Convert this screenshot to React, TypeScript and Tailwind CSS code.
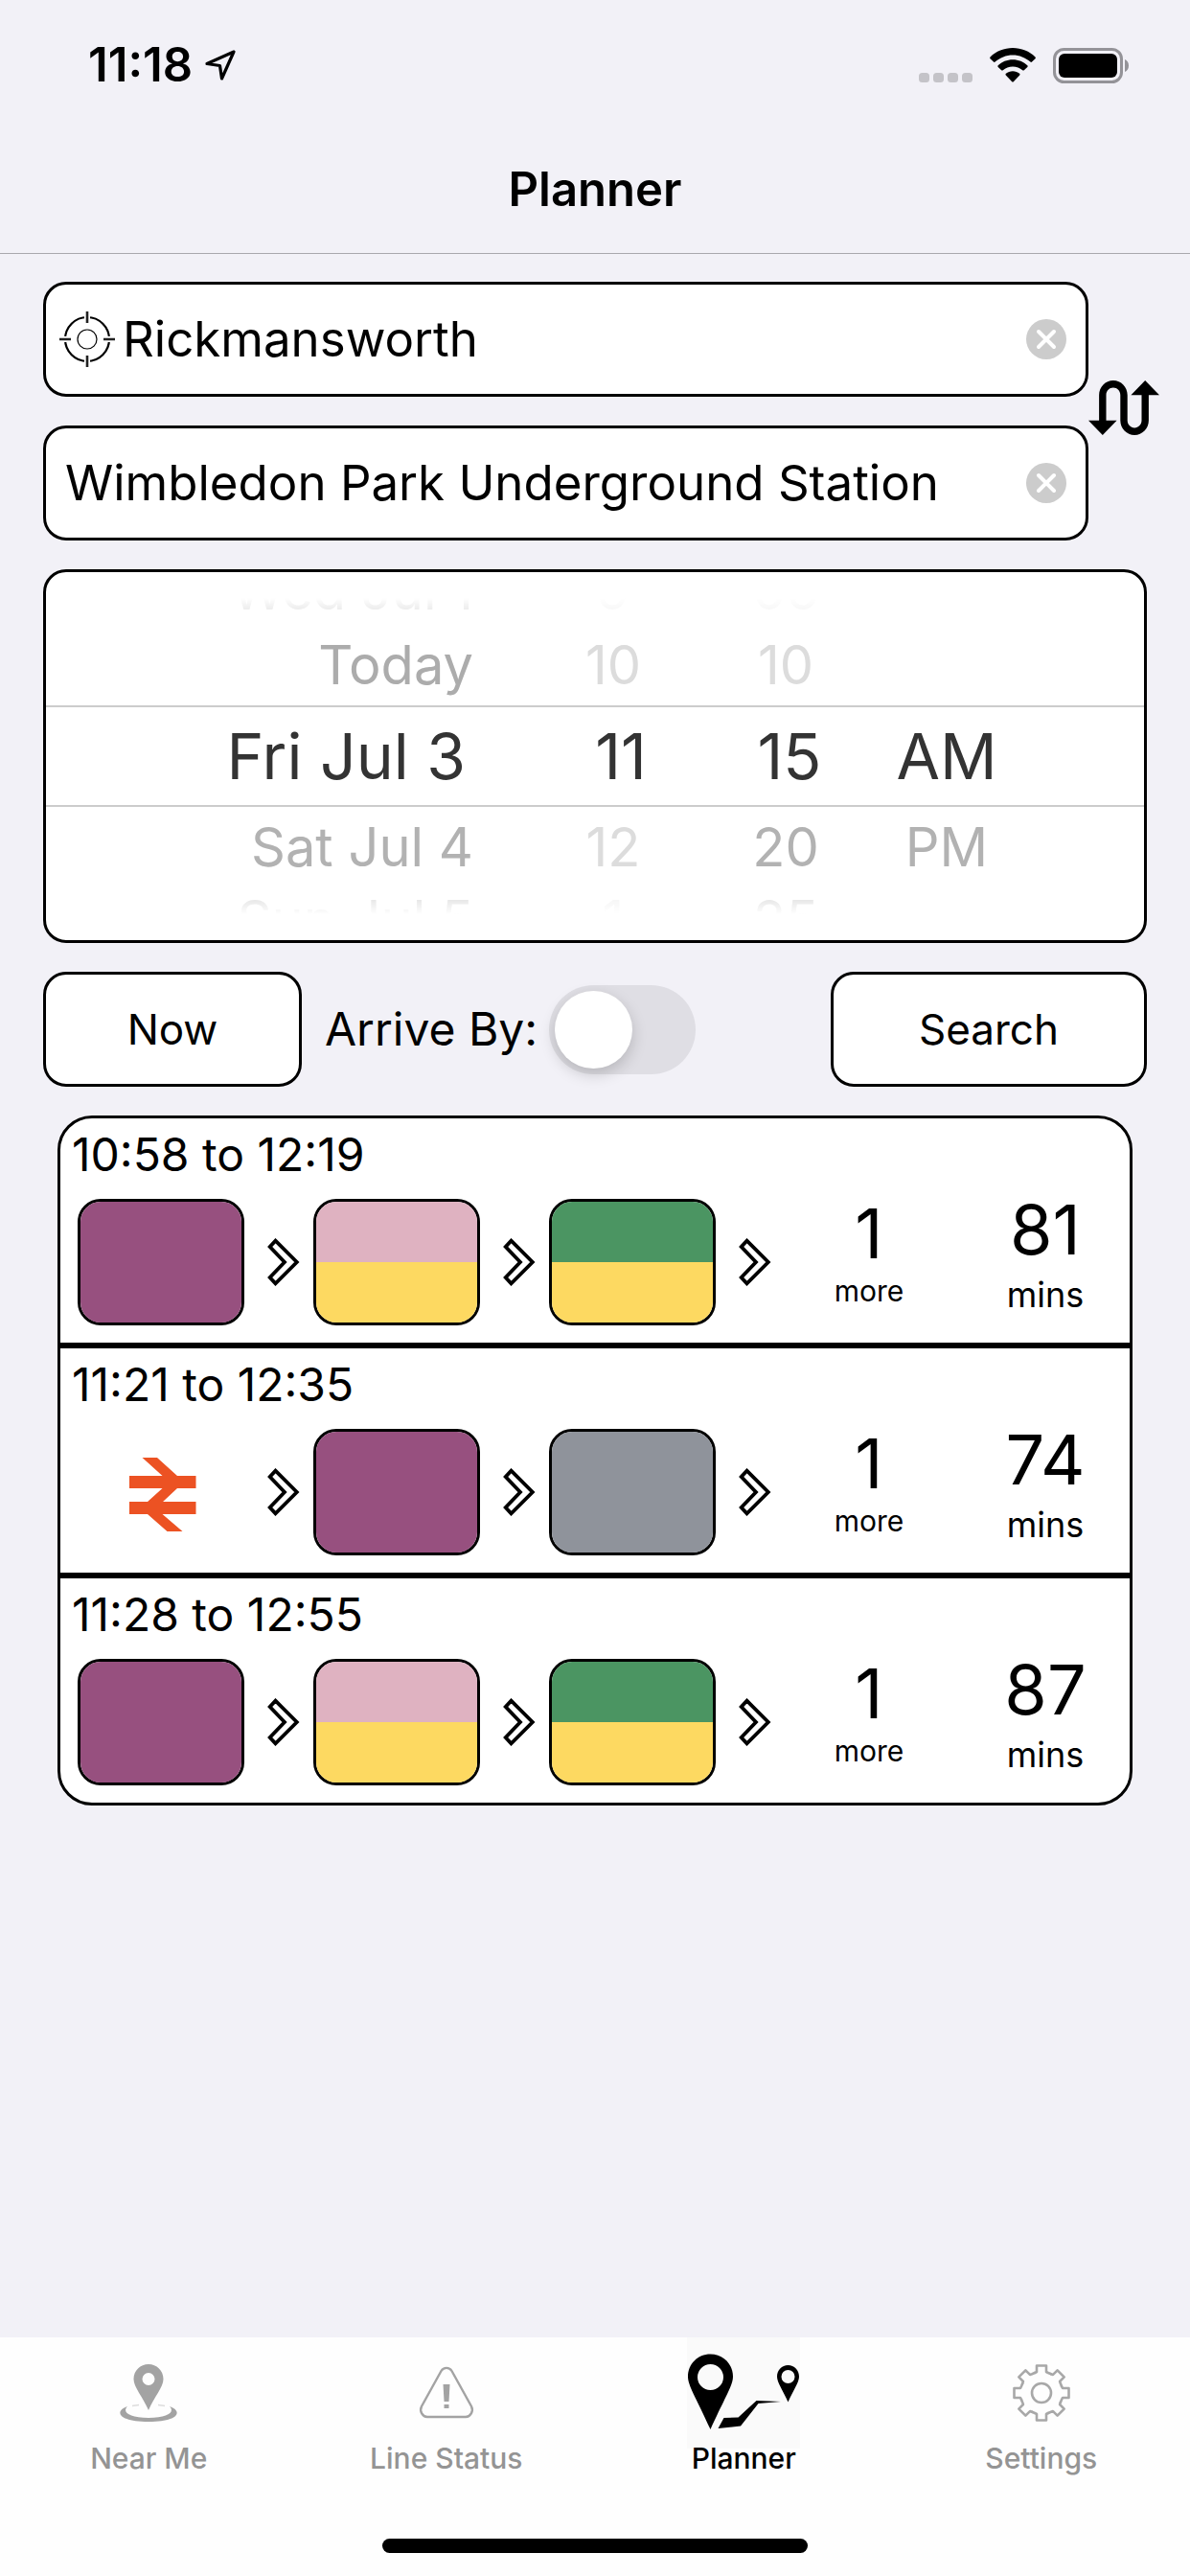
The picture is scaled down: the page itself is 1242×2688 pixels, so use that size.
import { useState } from 'react';
import clsx from 'clsx';

type Leg = 'metropolitan' | 'rail' | 'hammersmith-circle' | 'district-circle' | 'jubilee';

interface Journey {
  depart: string;
  arrive: string;
  legs: Leg[];
  more: number;
  mins: number;
}

const journeys: Journey[] = [
  { depart: '10:58', arrive: '12:19', legs: ['metropolitan', 'hammersmith-circle', 'district-circle'], more: 1, mins: 81 },
  { depart: '11:21', arrive: '12:35', legs: ['rail', 'metropolitan', 'jubilee'], more: 1, mins: 74 },
  { depart: '11:28', arrive: '12:55', legs: ['metropolitan', 'hammersmith-circle', 'district-circle'], more: 1, mins: 87 },
];

const legColors: Record<Exclude<Leg, 'rail'>, string[]> = {
  metropolitan: ['bg-[#97507f]'],
  'hammersmith-circle': ['bg-[#dfb2c1]', 'bg-[#fdd961]'],
  'district-circle': ['bg-[#4b9562]', 'bg-[#fdd961]'],
  jubilee: ['bg-[#8f939b]'],
};

interface WheelItem {
  text: string;
  color: string;
}

interface Wheel {
  label: string;
  align: string;
  selectedAlign: string;
  items: WheelItem[];
}

// five visible slots per wheel, the middle one is the selection
const wheels: Wheel[] = [
  {
    label: 'Date',
    align: 'justify-end pr-14',
    selectedAlign: 'justify-end pr-16',
    items: [
      { text: 'Wed Jul 1', color: 'text-[#d8d8d8]' },
      { text: 'Today', color: 'text-[#acacac]' },
      { text: 'Fri Jul 3', color: 'text-[#333333]' },
      { text: 'Sat Jul 4', color: 'text-[#b2b2b2]' },
      { text: 'Sun Jul 5', color: 'text-[#d8d8d8]' },
    ],
  },
  {
    label: 'Hour',
    align: 'justify-center',
    selectedAlign: 'justify-center pl-4',
    items: [
      { text: '9', color: 'text-[#f0f0f0]' },
      { text: '10', color: 'text-[#dcdcdc]' },
      { text: '11', color: 'text-[#333333]' },
      { text: '12', color: 'text-[#dcdcdc]' },
      { text: '1', color: 'text-[#f0f0f0]' },
    ],
  },
  {
    label: 'Minute',
    align: 'justify-center',
    selectedAlign: 'justify-center pl-2',
    items: [
      { text: '05', color: 'text-[#f0f0f0]' },
      { text: '10', color: 'text-[#dcdcdc]' },
      { text: '15', color: 'text-[#333333]' },
      { text: '20', color: 'text-[#b2b2b2]' },
      { text: '25', color: 'text-[#d8d8d8]' },
    ],
  },
  {
    label: 'AM or PM',
    align: 'justify-center pr-32',
    selectedAlign: 'justify-center pr-32',
    items: [
      { text: '', color: '' },
      { text: '', color: '' },
      { text: 'AM', color: 'text-[#333333]' },
      { text: 'PM', color: 'text-[#b2b2b2]' },
      { text: '', color: '' },
    ],
  },
];

const slotStyles = [
  'h-7 items-end pb-2 text-[56px] leading-[56px]',
  'h-[84px] items-center text-[56px] leading-[56px]',
  'h-[106px] items-center border-y-2 border-[#cccccc] text-[66px] leading-[72px]',
  'h-[84px] items-center text-[56px] leading-[56px]',
  'h-7 items-start pt-1.5 text-[56px] leading-[56px]',
];

function StatusBar() {
  return (
    <div className="flex h-33 items-center justify-between pt-1 pl-[92px] pr-16">
      <div className="flex items-center gap-3">
        <span className="text-[49px] leading-[56px] font-semibold">11:18</span>
        <svg width="34" height="34" viewBox="0 0 34 34" fill="none" stroke="black" strokeWidth="3.2" strokeLinejoin="round">
          <path d="M31 3 L3 15.5 L16.5 17.5 L18.5 31 Z" />
        </svg>
      </div>
      <div className="flex items-center gap-[18px]">
        <svg width="56" height="36" viewBox="0 0 56 36" fill="#c4c3c8">
          <rect x="0" y="26" width="11" height="10" rx="3.5" />
          <rect x="15" y="26" width="11" height="10" rx="3.5" />
          <rect x="30" y="26" width="11" height="10" rx="3.5" />
          <rect x="45" y="26" width="11" height="10" rx="3.5" />
        </svg>
        <svg width="48" height="36" viewBox="0 0 48 36" fill="black">
          <path d="M24 0 C33 0 41.500 3.500 47.500 9.500 C48 10 48 10.700 47.500 11.200 L44 14.600 C43.600 15 42.900 15 42.400 14.600 C37.400 10 31 7.400 24 7.400 C17 7.400 10.600 10 5.600 14.600 C5.100 15 4.400 15 4 14.600 L0.500 11.200 C0 10.700 0 10 0.500 9.500 C6.500 3.500 15 0 24 0 Z" />
          <path d="M24 12.200 C30 12.200 35.400 14.400 39.300 18.200 C39.800 18.700 39.800 19.400 39.300 19.900 L35.800 23.300 C35.400 23.700 34.700 23.700 34.200 23.300 C31.500 21 28 19.600 24 19.600 C20 19.600 16.500 21 13.800 23.300 C13.300 23.700 12.600 23.700 12.200 23.300 L8.700 19.900 C8.200 19.400 8.200 18.700 8.700 18.200 C12.600 14.400 18 12.200 24 12.200 Z" />
          <path d="M24 24.300 C26.700 24.300 29.200 25.200 31.100 26.800 C31.600 27.200 31.600 28 31.200 28.400 L24.800 35.200 C24.300 35.700 23.700 35.700 23.200 35.200 L16.800 28.400 C16.400 28 16.400 27.200 16.900 26.800 C18.800 25.200 21.300 24.300 24 24.300 Z" />
        </svg>
        <svg width="79" height="37" viewBox="0 0 79 37">
          <rect x="1.500" y="1.500" width="70" height="34" rx="10" fill="none" stroke="#949398" strokeWidth="3" />
          <rect x="6" y="6" width="61" height="25" rx="6" fill="black" />
          <path d="M75 12 C77.500 13 79 15.500 79 18.500 C79 21.500 77.500 24 75 25 Z" fill="#949398" />
        </svg>
      </div>
    </div>
  );
}

function TargetIcon() {
  return (
    <svg width="58" height="58" viewBox="0 0 58 58" fill="none" stroke="black" className="shrink-0">
      <circle cx="29" cy="29" r="23" strokeWidth="2.200" />
      <circle cx="29" cy="29" r="10" strokeWidth="1.200" />
      <path d="M29 0 V12 M29 46 V58 M0 29 H12 M46 29 H58" stroke="white" strokeWidth="6" />
      <path d="M29 0 V12 M29 46 V58 M0 29 H12 M46 29 H58" strokeWidth="2.600" stroke="#222222" />
    </svg>
  );
}

function ClearIcon() {
  return (
    <svg width="42" height="42" viewBox="0 0 42 42">
      <circle cx="21" cy="21" r="21" fill="#cccccc" />
      <path d="M13 13 L29 29 M29 13 L13 29" stroke="white" strokeWidth="4" strokeLinecap="round" />
    </svg>
  );
}

function SwapIcon() {
  return (
    <svg width="74" height="57" viewBox="2 4 20 15" preserveAspectRatio="none" fill="black">
      <path d="M18 4l-4 4h3v7c0 1.100-.9 2-2 2s-2-.9-2-2V8c0-2.210-1.790-4-4-4S5 5.790 5 8v7H2l4 4 4-4H7V8c0-1.100.9-2 2-2s2 .9 2 2v7c0 2.210 1.790 4 4 4s4-1.790 4-4V8h3l-4-4z" />
    </svg>
  );
}

function ChevronIcon() {
  return (
    <svg width="34" height="50" viewBox="0 0 34 50" fill="white" stroke="black" strokeWidth="3.800">
      <path d="M8.500 2.700 L30.800 25 L8.500 47.300 L2.700 41 L18 25 L2.700 9 Z" />
    </svg>
  );
}

function RailIcon() {
  return (
    <svg width="70" height="77" viewBox="0 0 70 77" fill="#ec5223">
      <path d="M13.500 0 H29 L50 19 H69.500 V32 H50 L35 46 H69.500 V59 H34.500 L55.500 77 H39.500 L19 59 H0 V46 H19 L34.500 32 H0 V19 H34.500 Z" />
    </svg>
  );
}

function NearMeIcon() {
  return (
    <svg width="60" height="60" viewBox="0 0 60 60" fill="#a3a3a3">
      <path fillRule="evenodd" d="M30 0 C38.500 0 45.500 6.500 45.500 15.500 C45.500 24 36 34 30 48 C24 34 14.500 24 14.500 15.500 C14.500 6.500 21.500 0 30 0 Z M30 9 A6.500 6.500 0 1 0 30 22 A6.500 6.500 0 1 0 30 9 Z" />
      <path d="M8 44 C-6 49 -2 60 30 60 C62 60 66 49 52 44 C58 50 50 56 30 56 C10 56 2 50 8 44 Z" />
      <path d="M13 43.500 L20 42.500 M47 43.500 L40 42.500" stroke="#dddddd" strokeWidth="1.500" />
    </svg>
  );
}

function LineStatusIcon() {
  return (
    <svg width="60" height="60" viewBox="0 0 60 60" fill="none" stroke="#a3a3a3" strokeWidth="2.400">
      <path d="M24.500 7 C27 2.800 33 2.800 35.500 7 L56 44 C58.500 49 55 55 50 55 H10 C5 55 1.500 49 4 44 Z" />
      <path d="M26.500 21 H33.500 L32.500 39 H27.500 Z M27.500 42 H32.500 V46 H27.500 Z" fill="#a3a3a3" stroke="none" />
    </svg>
  );
}

function PlannerIcon() {
  return (
    <svg width="120" height="116" viewBox="0 2 120 116" fill="black">
      <rect x="1" y="2" width="118" height="116" fill="#fafafa" />
      <path fillRule="evenodd" d="M25.500 19.500 C39 19.500 49 30 49 43 C49 52 41 64 25.500 98 C10 64 2 52 2 43 C2 30 12 19.500 25.500 19.500 Z M25.500 30 A13.500 13.500 0 1 0 25.500 57 A13.500 13.500 0 1 0 25.500 30 Z" />
      <path fillRule="evenodd" d="M106.500 31 C113 31 118 36 118 43 C118 49 112 57 106.500 69.500 C101 57 95 49 95 43 C95 36 100 31 106.500 31 Z M106.500 36 A7 7 0 1 0 106.500 50 A7 7 0 1 0 106.500 36 Z" />
      <path d="M39.500 86 L54.500 85.500 L73.500 68 L99 69 L75.500 71 L57 94.500 L33.500 97 Z" />
    </svg>
  );
}

function SettingsIcon() {
  const tooth = 'M23 9 L25 8 V1.500 H35 V8 L37 9 L39.900 10.200';
  return (
    <svg width="60" height="60" viewBox="0 0 60 60" fill="none" stroke="#a8a8a8" strokeWidth="2.600" strokeLinejoin="round" strokeLinecap="round">
      {[0, 45, 90, 135, 180, 225, 270, 315].map(angle => (
        <path key={angle} d={tooth} transform={`rotate(${angle} 30 30)`} />
      ))}
      <circle cx="30" cy="30" r="10" />
    </svg>
  );
}

function StopField({ label, value, onChange, located }: {
  label: string;
  value: string;
  onChange: (value: string) => void;
  located?: boolean;
}) {
  return (
    <div className={clsx('flex h-30 items-center rounded-3xl border-3 border-black bg-white pr-5', located ? 'gap-2 pl-3.5' : 'pl-5')}>
      {located && <TargetIcon />}
      <input
        type="text"
        aria-label={label}
        value={value}
        onChange={e => onChange(e.target.value)}
        className="min-w-0 flex-1 bg-transparent text-[51px] leading-[64px] outline-none"
      />
      <button type="button" aria-label={`Clear ${label}`} onClick={() => onChange('')}>
        <ClearIcon />
      </button>
    </div>
  );
}

function TimePicker() {
  return (
    <div className="rounded-3xl border-3 border-black bg-white">
      {/* outer slots fade out towards the top and bottom of the wheels */}
      <div className="grid grid-cols-[502fr_180fr_180fr_284fr] py-[27px] mask-[linear-gradient(to_bottom,transparent_27px,black_52px,black_calc(100%-52px),transparent_calc(100%-27px))]">
        {wheels.map(wheel => (
          <ul key={wheel.label} role="listbox" aria-label={wheel.label}>
            {wheel.items.map((item, i) => (
              <li
                key={i}
                role="option"
                aria-selected={i === 2}
                className={clsx('flex whitespace-nowrap', slotStyles[i], i === 2 ? wheel.selectedAlign : wheel.align, item.color)}
              >
                {item.text}
              </li>
            ))}
          </ul>
        ))}
      </div>
    </div>
  );
}

function LegTile({ leg }: { leg: Leg }) {
  if (leg === 'rail') {
    return (
      <div className="flex h-33 w-[174px] items-center justify-center pt-1 pl-1">
        <RailIcon />
      </div>
    );
  }
  return (
    <div className="flex h-33 w-[174px] flex-col overflow-hidden rounded-3xl border-3 border-black">
      {legColors[leg].map(color => (
        <div key={color} className={clsx('flex-1', color)} />
      ))}
    </div>
  );
}

function JourneyRow({ journey }: { journey: Journey }) {
  return (
    <button type="button" className="block w-full pt-2 pb-[18px] text-left">
      <div className="pl-3 text-[48px] leading-[60px]">{journey.depart} to {journey.arrive}</div>
      <div className="mt-4 flex pl-[18px]">
        {journey.legs.map((leg, i) => (
          <div key={i} className="flex items-center">
            <LegTile leg={leg} />
            <div className="w-18 pl-6"><ChevronIcon /></div>
          </div>
        ))}
        <div className="flex w-44 flex-col items-center gap-2 pt-1">
          <span className="text-[72px] leading-16">{journey.more}</span>
          <span className="text-[30px] leading-10">more</span>
        </div>
        <div className="flex flex-1 flex-col items-center gap-4 pl-2">
          <span className="text-[72px] leading-16">{journey.mins}</span>
          <span className="text-[36px] leading-10">mins</span>
        </div>
      </div>
    </button>
  );
}

const tabs = [
  { name: 'Near Me', icon: <NearMeIcon /> },
  { name: 'Line Status', icon: <LineStatusIcon /> },
  { name: 'Planner', icon: <PlannerIcon /> },
  { name: 'Settings', icon: <SettingsIcon /> },
];

export default function App() {
  const [from, setFrom] = useState('Rickmansworth');
  const [to, setTo] = useState('Wimbledon Park Underground Station');
  const [arriveBy, setArriveBy] = useState(false);

  const swap = () => {
    setFrom(to);
    setTo(from);
  };

  return (
    <div className="flex min-h-screen flex-col bg-[#f2f1f7] font-[Inter,sans-serif] text-black">
      <header className="border-b border-[#a9a8ad]">
        <StatusBar />
        <h1 className="flex h-33 items-center justify-center text-[49px] leading-[60px] font-semibold">Planner</h1>
      </header>

      <main className="flex-1 pt-[29px]">
        <div className="flex items-center pr-8 pl-[45px]">
          <div className="flex flex-1 flex-col gap-[30px]">
            <StopField label="From" value={from} onChange={setFrom} located />
            <StopField label="To" value={to} onChange={setTo} />
          </div>
          <button type="button" aria-label="Swap stations" onClick={swap} className="pb-2">
            <SwapIcon />
          </button>
        </div>

        <div className="mt-[30px] flex flex-col gap-[30px] px-[45px]">
          <TimePicker />

          <div className="flex items-center">
            <button type="button" className="h-30 w-[270px] rounded-3xl border-3 border-black bg-white text-[44px]">Now</button>
            <label htmlFor="arrive-by" className="ml-6 text-[48px] leading-[60px]">Arrive By:</label>
            <input
              id="arrive-by"
              type="checkbox"
              role="switch"
              checked={arriveBy}
              onChange={e => setArriveBy(e.target.checked)}
              className="ml-3 h-[93px] w-[153px] appearance-none rounded-full bg-[#dfdee4] p-1.5 before:block before:size-[81px] before:rounded-full before:bg-white before:shadow-[0_6px_16px_rgba(0,0,0,0.18)] checked:bg-green-500 checked:before:ml-[60px]"
            />
            <button type="button" className="ml-auto h-30 w-[330px] rounded-3xl border-3 border-black bg-white text-[44px]">Search</button>
          </div>

          <ul className="mx-[15px] divide-y-6 divide-black overflow-hidden rounded-[36px] border-3 border-black bg-white">
            {journeys.map(journey => (
              <li key={journey.depart}>
                <JourneyRow journey={journey} />
              </li>
            ))}
          </ul>
        </div>
      </main>

      <footer className="bg-[#fefefe] pb-6">
        <nav className="grid h-[210px] grid-cols-4">
          {tabs.map(tab => (
            <a
              key={tab.name}
              href="#"
              aria-current={tab.name === 'Planner' ? 'page' : undefined}
              className={clsx('flex flex-col items-center text-[30px] leading-9 font-medium', tab.name === 'Planner' ? 'text-black' : 'text-[#949494]')}
            >
              <span className="flex h-[116px] items-center">{tab.icon}</span>
              <span className="-mt-2">{tab.name}</span>
            </a>
          ))}
        </nav>
        <div className="mx-auto h-[15px] w-[444px] rounded-full bg-black" />
      </footer>
    </div>
  );
}
